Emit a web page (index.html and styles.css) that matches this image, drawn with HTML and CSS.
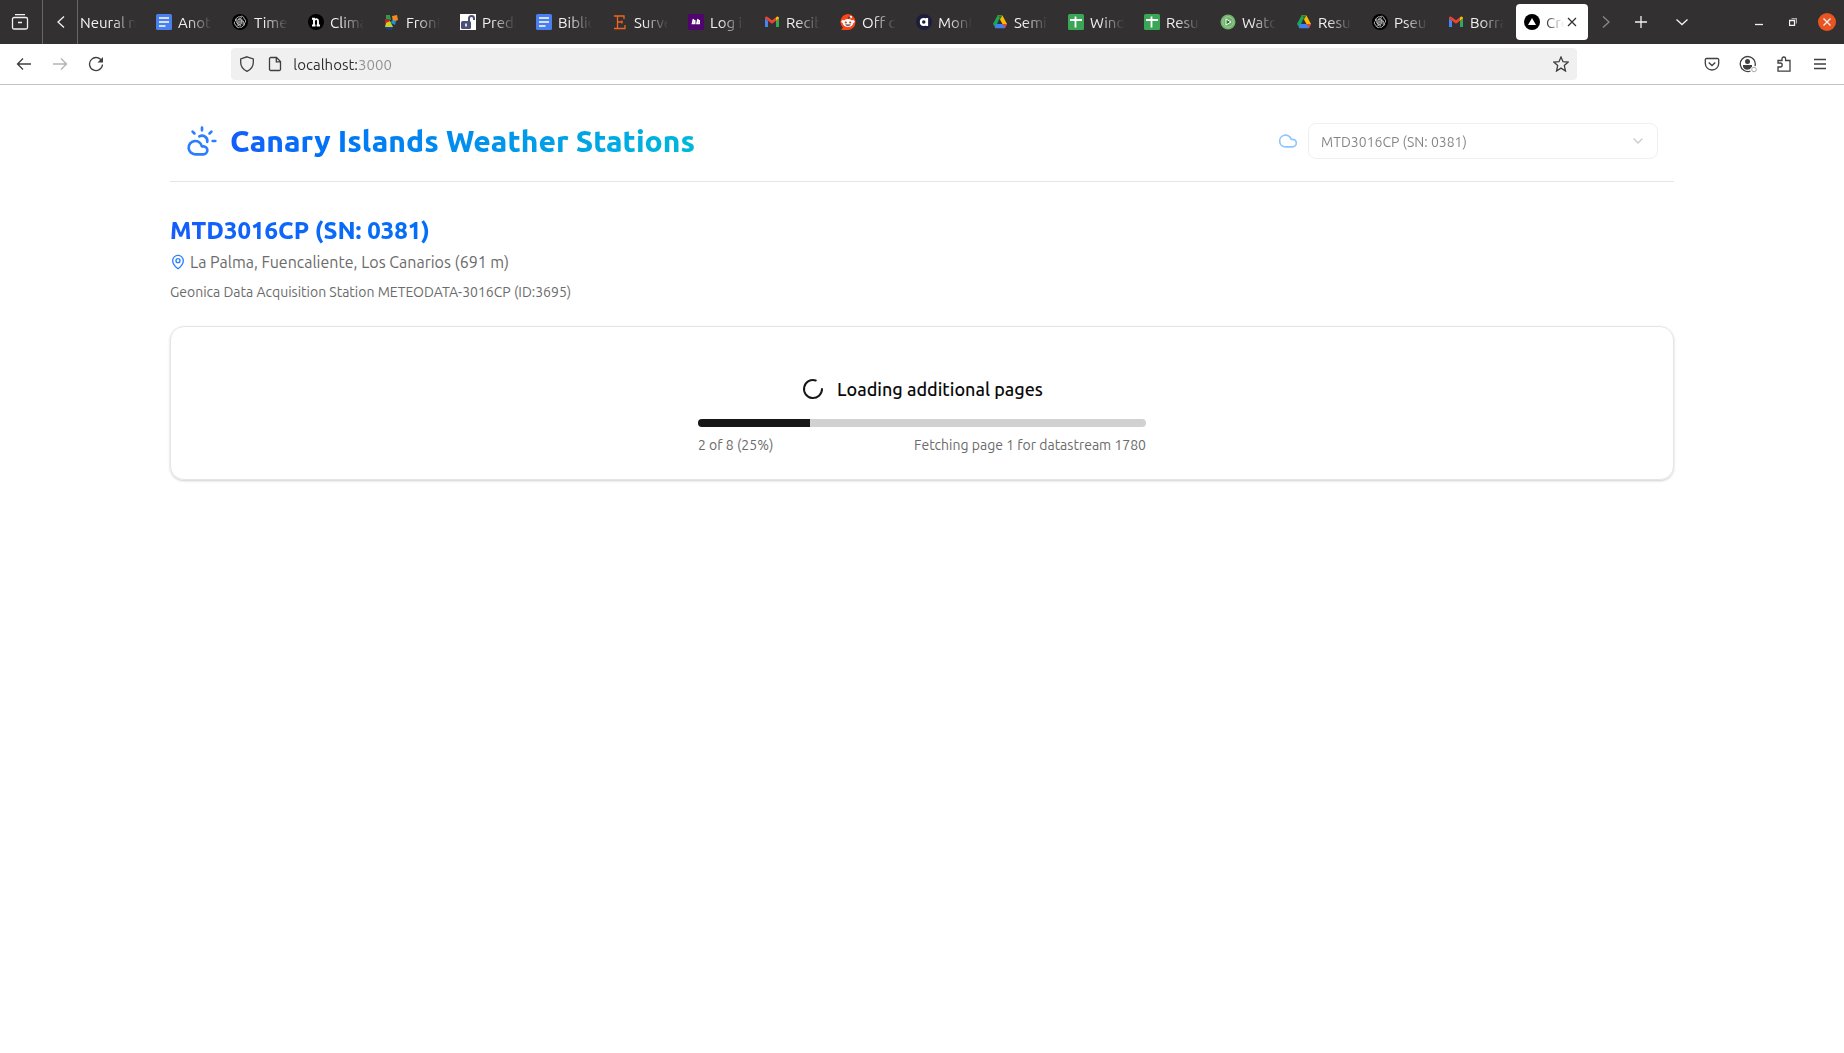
FILE: index.html
```html
<!DOCTYPE html>
<html lang="en">
<head>
<meta charset="utf-8">
<title>Canary Islands Weather Stations</title>
<link rel="stylesheet" href="styles.css">
</head>
<body>
<svg class="sprite" aria-hidden="true">
  <symbol id="docs" viewBox="0 0 16 16"><rect width="16" height="16" rx="1.500" fill="#4a80ee"/><path d="M3 4h10M3 8h10M3 12h6.500" stroke="#fff" stroke-width="1.600"/></symbol>
  <symbol id="gpt" viewBox="0 0 16 16"><circle cx="8" cy="8" r="8" fill="#000"/><g fill="none" stroke="#ddd" stroke-width=".8"><path d="M8 3a2.300 2.300 0 0 1 4 1.800A2.300 2.300 0 0 1 12.500 9 2.300 2.300 0 0 1 11 12a2.300 2.300 0 0 1-3.200 1A2.300 2.300 0 0 1 4 11.200 2.300 2.300 0 0 1 3.500 7 2.300 2.300 0 0 1 5 4 2.300 2.300 0 0 1 8 3z"/><path d="M6 10.800V5.800L10 3.500M4.800 5v4.200l4.500 2.600M5 12.300 9.800 9.500V5M11.200 6.800v4.500M6.500 4.500 11.500 7.500M7 7.300l1-.6 1 .6v1.400l-1 .6-1-.6z"/></g></symbol>
  <symbol id="nn" viewBox="0 0 16 16"><circle cx="8" cy="8" r="8" fill="#000"/><path d="M4 4.800h2v6.700M4 11.500h3.500M6 6.500c1.500-2 4-1.800 4 .5v4.500M8.600 11.500H12" fill="none" stroke="#fff" stroke-width="1.900"/></symbol>
  <symbol id="cubes" viewBox="0 0 16 16"><path d="m2 1 4 0 1 5-5-1z" fill="#2a9d4b"/><path d="m8 2 5-1 1 5-5 2z" fill="#f58a1f"/><path d="m1 5 5 1-1 4-4-1z" fill="#c91f2d"/><path d="m8 6 4 1-1 4-4-2z" fill="#1b95d1"/><path d="m2 9 4-2 3 6-8 0z" fill="#c6d420"/><path d="m1 13 8 0-1 3-6-1z" fill="#1b3e9a"/></symbol>
  <symbol id="lock" viewBox="0 0 16 16"><rect width="16" height="16" fill="#fff"/><rect x="1" y="7" width="10" height="8" rx="1.500" fill="#4d5075"/><path d="M9 8V4.500a2.500 2.500 0 0 1 5 0V6" fill="none" stroke="#4d5075" stroke-width="2"/><path d="M6 9.500v3" stroke="#fff" stroke-width="1.600"/></symbol>
  <symbol id="etsy" viewBox="0 0 16 16"><path d="M2 2h10v3M2 14.500h11V11M5.500 2v12.500M5.500 8H10M10 6.500v3" fill="none" stroke="#f1641e" stroke-width="1.300"/></symbol>
  <symbol id="quote" viewBox="0 0 16 16"><rect width="16" height="16" fill="#50056e"/><path d="M5.500 5 4.500 9.500h2.200V6M10 5 9 9.500h2.200V6" fill="none" stroke="#fff" stroke-width="1.600"/></symbol>
  <symbol id="gmail" viewBox="0 0 16 16"><path d="M1 13V4.500l3 2.200V13z" fill="#4285f4"/><path d="M12 13V6.700l3-2.200V13z" fill="#34a853"/><path d="M1 3.500C1.500 2 3 2.500 4 3.200L8 6.300l4-3.100V6.700L8 9.800 4 6.700 1 4.500z" fill="#ea4335"/><path d="M12 3.200c1.500-1.200 3-.5 3 1.300l-3 2.200z" fill="#fbbc04"/></symbol>
  <symbol id="reddit" viewBox="0 0 16 16"><path d="M8 0a8 8 0 1 1-1 16H1l2-2.200A8 8 0 0 1 8 0z" fill="#ff4518"/><ellipse cx="8" cy="9" rx="5.300" ry="4" fill="#fff"/><circle cx="2.900" cy="7.500" r="1.500" fill="#fff"/><circle cx="13.100" cy="7.500" r="1.500" fill="#fff"/><circle cx="10.800" cy="3" r="1.200" fill="#fff"/><circle cx="5.800" cy="8.500" r="1.100" fill="#d43b14"/><circle cx="10.200" cy="8.500" r="1.100" fill="#d43b14"/><path d="M5.500 10.700h5Q8 13 5.500 10.700zM8 5l.6-2.200 2 .4" fill="#444" stroke="#333" stroke-width=".4"/></symbol>
  <symbol id="aa" viewBox="0 0 16 16"><circle cx="8" cy="8" r="8" fill="#1e1d3b"/><circle cx="7.800" cy="8" r="2.900" fill="none" stroke="#fff" stroke-width="2.200"/><path d="M11 4v8" stroke="#fff" stroke-width="2.200"/></symbol>
  <symbol id="drive" viewBox="0 0 16 16"><path d="M5.500 1.500h3L3.500 14 1 10z" fill="#1ca45c"/><path d="M5.500 1.500h5L15 10h-4.500L8 5.500z" fill="#ffba00"/><path d="M5.500 1.500h5L8 5.500z" fill="#188038"/><path d="M3.700 10H15l-2.200 4.300H2.900z" fill="#3f7ff0"/><path d="M10.500 10H15l-2 4z" fill="#ea4335"/></symbol>
  <symbol id="sheet" viewBox="0 0 16 16"><rect width="16" height="16" rx="1.500" fill="#3aa757"/><path d="M2 6h12M7.500 2.500v11" stroke="#fff" stroke-width="1.800"/></symbol>
  <symbol id="play" viewBox="0 0 16 16"><circle cx="8" cy="8" r="7.500" fill="#70b36c"/><circle cx="8" cy="8" r="5.300" fill="none" stroke="#9bcf94"/><path d="m6 5 5 3-5 3z" fill="#2f6e35" stroke="#fff"/></symbol>
  <symbol id="next" viewBox="0 0 16 16"><circle cx="8" cy="8" r="8" fill="#000"/><path d="m8 4 4 7H4z" fill="#fff"/></symbol>
</svg>

<div class="tabstrip">
  <button class="strip-btn recent" aria-label="Recent tabs"><svg width="18" height="18" viewBox="0 0 18 18"><path d="M4 1.700h10M3 4.500h12a1.500 1.500 0 0 1 1.500 1.500v8.500A1.500 1.500 0 0 1 15 16H3a1.500 1.500 0 0 1-1.500-1.500V6A1.500 1.500 0 0 1 3 4.500zM7 9.500h4"/></svg></button>
  <button class="strip-btn scroll-left" aria-label="Scroll tabs left"><svg width="16" height="16" viewBox="0 0 16 16"><path d="M11 2.500 5 8l6 5.500"/></svg></button>
  <div class="tabs">
    <button class="tab first"><span>Neural n</span></button>
    <button class="tab"><svg><use href="#docs"/></svg><span>Anot</span></button>
    <button class="tab"><svg><use href="#gpt"/></svg><span>Time</span></button>
    <button class="tab"><svg><use href="#nn"/></svg><span>Clima</span></button>
    <button class="tab"><svg><use href="#cubes"/></svg><span>Front</span></button>
    <button class="tab"><svg><use href="#lock"/></svg><span>Predi</span></button>
    <button class="tab"><svg><use href="#docs"/></svg><span>Biblic</span></button>
    <button class="tab"><svg><use href="#etsy"/></svg><span>Surve</span></button>
    <button class="tab"><svg><use href="#quote"/></svg><span>Log in</span></button>
    <button class="tab"><svg><use href="#gmail"/></svg><span>Recib</span></button>
    <button class="tab"><svg><use href="#reddit"/></svg><span>Off c</span></button>
    <button class="tab"><svg><use href="#aa"/></svg><span>Mont</span></button>
    <button class="tab"><svg><use href="#drive"/></svg><span>Semi</span></button>
    <button class="tab"><svg><use href="#sheet"/></svg><span>Wind</span></button>
    <button class="tab"><svg><use href="#sheet"/></svg><span>Resu</span></button>
    <button class="tab"><svg><use href="#play"/></svg><span>Watc</span></button>
    <button class="tab"><svg><use href="#drive"/></svg><span>Resu</span></button>
    <button class="tab"><svg><use href="#gpt"/></svg><span>Pseu</span></button>
    <button class="tab"><svg><use href="#gmail"/></svg><span>Borra</span></button>
    <button class="tab active"><svg><use href="#next"/></svg><span>Cre</span><svg class="tab-close" viewBox="0 0 8 8"><path d="m0 0 8 8M8 0 0 8"/></svg></button>
  </div>
  <button class="strip-btn scroll-right" aria-label="Scroll tabs right"><svg width="16" height="16" viewBox="0 0 16 16"><path d="m5 2.500 6 5.500-6 5.500"/></svg></button>
  <button class="strip-btn" aria-label="New tab"><svg width="12" height="12" viewBox="0 0 12 12"><path d="M6 0v12M0 6h12"/></svg></button>
  <button class="strip-btn all-tabs" aria-label="List all tabs"><svg width="14" height="14" viewBox="0 0 14 14"><path d="m1.500 4.500 5.500 5 5.500-5"/></svg></button>
  <div class="window-buttons">
    <button class="strip-btn" aria-label="Minimize"><svg width="8" height="8" viewBox="0 0 8 8"><path d="M0 6.500h8"/></svg></button>
    <button class="strip-btn" aria-label="Restore"><svg width="8" height="8" viewBox="0 0 8 8"><path d="M.5 2.500h5v5h-5z"/><path class="dim" d="M2.500.5h5v5"/></svg></button>
    <button class="strip-btn" aria-label="Close"><svg width="18" height="18" viewBox="0 0 18 18"><circle class="close-disc" cx="9" cy="9" r="9"/><path d="m5.500 5.500 7 7m0-7-7 7"/></svg></button>
  </div>
</div>

<div class="toolbar">
  <button class="tool" aria-label="Back"><svg width="16" height="16" viewBox="0 0 16 16"><path d="M15 8H1.500M7 2.500 1.500 8 7 13.500"/></svg></button>
  <button class="tool faded" aria-label="Forward"><svg width="16" height="16" viewBox="0 0 16 16"><path d="M1 8h13.500M9 2.500 14.500 8 9 13.500"/></svg></button>
  <button class="tool" aria-label="Reload"><svg width="16" height="16" viewBox="0 0 16 16"><path d="M14 5.500A6.500 6.500 0 1 0 14.500 8.500"/><path class="solid" d="M15 1v5.500H9.500z"/></svg></button>
  <div class="spring"></div>
  <div class="urlbar">
    <svg width="16" height="16" viewBox="0 0 16 16"><path d="M8 .8 14.300 3v3.500c0 4-2.500 7-6.300 8.800C4.200 13.500 1.700 10.500 1.700 6.500V3z"/></svg>
    <svg width="16" height="16" viewBox="0 0 16 16"><path d="M3.700 1.500h5.800l4 4v7.800a1.200 1.200 0 0 1-1.200 1.200H3.700a1.200 1.200 0 0 1-1.200-1.200V2.700a1.200 1.200 0 0 1 1.200-1.200zM9.300 1.500v4.300h4.200"/></svg>
    <input class="address" type="text" value="localhost:3000" aria-label="Address">
    <svg width="16" height="16" viewBox="0 0 16 16"><path d="m8 1 2 4.700 5.200.4-3.900 3.500L12.500 15 8 12.100 3.500 15l1.200-5.400L.8 6.100 6 5.700z"/></svg>
  </div>
  <div class="spring"></div>
  <button class="tool" aria-label="Pocket"><svg width="16" height="16" viewBox="0 0 16 16"><path d="M2.500 2.500h11a1.200 1.200 0 0 1 1.200 1.200v3.800a6.700 6.500 0 0 1-13.400 0V3.700a1.200 1.200 0 0 1 1.200-1.200z"/><path d="M4.700 6.500 8 9.500l3.300-3" stroke-width="1.600"/></svg></button>
  <button class="tool" aria-label="Account"><svg width="18" height="18" viewBox="0 0 18 18"><path d="M11.500 16A7.500 7.500 0 1 1 16 11"/><circle class="solid" cx="8.500" cy="6.500" r="2.500"/><path class="solid" d="M4 10h9v1.500L11 14c-2 1-4 1-5.500 0L4 12z"/><circle class="status" cx="15" cy="14.500" r="2.300"/></svg></button>
  <button class="tool" aria-label="Extensions"><svg width="16" height="16" viewBox="0 0 16 16"><path d="M2 15.200V11h2.200a2 2 0 0 0 0-4H2V4.500h4V2.800a1.800 1.800 0 0 1 3.600 0v1.700H14v10.700z"/></svg></button>
  <button class="tool" aria-label="Menu"><svg width="12" height="12" viewBox="0 0 12 12"><path d="M0 1.500h12M0 6h12M0 10.500h12"/></svg></button>
</div>

<main class="page">
  <header class="site-header">
    <div class="brand">
      <svg class="lucide" width="32" height="32" viewBox="0 0 24 24"><path d="M12 2v2M4.930 4.930l1.410 1.410M20 12h2M19.070 4.930l-1.410 1.410M15.947 12.650a4 4 0 0 0-5.925-4.128M13 22H7a5 5 0 1 1 4.900-6H13a3 3 0 0 1 0 6Z"/></svg>
      <h1 class="gradient-text">Canary Islands Weather Stations</h1>
    </div>
    <div class="picker">
      <svg class="lucide cloud" width="20" height="20" viewBox="0 0 24 24"><path d="M17.500 19H9a7 7 0 1 1 6.710-9h1.790a4.500 4.500 0 1 1 0 9Z"/></svg>
      <div class="select-box">
        <select aria-label="Weather station" disabled><option>MTD3016CP (SN: 0381)</option></select>
        <svg class="lucide chevron" width="16" height="16" viewBox="0 0 24 24"><path d="m6 9 6 6 6-6"/></svg>
      </div>
    </div>
  </header>

  <section class="station">
    <h2 class="gradient-text">MTD3016CP (SN: 0381)</h2>
    <p class="location"><svg class="lucide" width="16" height="16" viewBox="0 0 24 24"><path d="M20 10c0 4.993-5.539 10.193-7.399 11.799a1 1 0 0 1-1.202 0C9.539 20.193 4 14.993 4 10a8 8 0 0 1 16 0"/><circle cx="12" cy="10" r="3"/></svg>La Palma, Fuencaliente, Los Canarios (691 m)</p>
    <p class="description">Geonica Data Acquisition Station METEODATA-3016CP (ID:3695)</p>
  </section>

  <section class="card">
    <div class="loading">
      <svg class="lucide spinner" width="24" height="24" viewBox="0 0 24 24"><path d="M21 12a9 9 0 1 1-6.219-8.560"/></svg>
      <label for="load-progress">Loading additional pages</label>
    </div>
    <div class="progress-group">
      <progress id="load-progress" value="2" max="8"></progress>
      <div class="progress-text"><span>2 of 8 (25%)</span><span>Fetching page 1 for datastream 1780</span></div>
    </div>
  </section>
</main>
</body>
</html>
```
FILE: styles.css
```css
* { box-sizing: border-box; }
body {
  margin: 0;
  background: #fff;
  color: #0a0a0a;
  font-family: Ubuntu, "Noto Sans", sans-serif;
  font-size: 14px;
  line-height: 20px;
}
h1, h2, p { margin: 0; }
button { border: 0; padding: 0; background: none; font: inherit; color: inherit; }
svg { flex: none; }
.sprite { display: none; }

/* Tab strip */
.tabstrip { display: flex; height: 44px; background: #333031; color: #f2f2f2; font-size: 15px; }
.strip-btn { display: flex; flex: none; align-items: center; justify-content: center; width: 38px; }
.strip-btn path { fill: none; stroke: #f2f2f2; stroke-width: 1.3; }
.strip-btn .dim { stroke: #aaa; }
.recent { width: 43px; padding-right: 2px; border-right: 1px solid #666; }
.scroll-left { width: 35px; padding-left: 2px; border-right: 1px solid #666; }
.scroll-right { width: 32px; opacity: .45; }
.all-tabs { width: 44px; }
.tabs { display: flex; min-width: 0; overflow: hidden; }
.tab {
  display: flex;
  flex: none;
  align-items: center;
  gap: 6px;
  width: 72px;
  margin: 4px 2px;
  padding: 2px 8px 0;
  border-radius: 4px;
}
.tab svg { width: 16px; height: 16px; margin-bottom: 2px; }
.tab span {
  flex: 1;
  min-width: 0;
  overflow: hidden;
  text-align: left;
  white-space: nowrap;
  mask-image: linear-gradient(to left, transparent, #000 24px);
}
.tab.first { width: 66px; margin-left: 0; padding-left: 2px; }
.tab.active { gap: 4px; background: #fff; color: #333; }
.tab.active span { margin-left: 2px; mask-image: linear-gradient(to left, transparent, #000 18px); }
.tab .tab-close { width: 8px; height: 8px; margin-right: 4px; stroke: #333; stroke-width: 1.3; overflow: visible; }
.window-buttons { display: flex; margin-left: auto; }
.window-buttons .strip-btn { width: 34px; }
.close-disc { fill: #e95420; }

/* Navigation toolbar */
.toolbar { display: flex; align-items: center; height: 41px; padding: 0 6px; border-bottom: 1px solid #c2c2c2; }
.tool { display: flex; flex: none; align-items: center; justify-content: center; width: 36px; height: 32px; }
.tool path, .urlbar path { fill: none; stroke: #3f3f3f; stroke-width: 1.3; }
.tool .solid { fill: #3f3f3f; stroke: none; }
.tool .status { fill: #fff; stroke: #aaa; }
.faded { opacity: .4; }
.spring { flex: 3; }
.urlbar { display: flex; flex: 34; align-items: center; gap: 12px; height: 32px; padding: 0 8px; border-radius: 4px; background: #f0f0f0; }
.address {
  flex: 1;
  min-width: 0;
  padding: 2px 0 0;
  margin-left: -2px;
  border: 0;
  background: linear-gradient(to right, #2b2b2b 64px, #8f8f8f 64px);
  background-clip: text;
  color: transparent;
  font: inherit;
  font-size: 15px;
}

/* Page */
.page { max-width: 1536px; margin: 0 auto; padding: 16px; }
.gradient-text {
  background: linear-gradient(to right in oklab, #155dfc, #00b8db);
  background-clip: text;
  color: transparent;
  font-weight: 800;
}
.lucide { fill: none; stroke: #2b7fff; stroke-width: 2; stroke-linecap: round; stroke-linejoin: round; }
.site-header {
  display: flex;
  align-items: center;
  justify-content: space-between;
  height: 81px;
  padding: 0 16px;
  border-bottom: 1px solid #e5e5e5;
}
.brand { display: flex; align-items: center; gap: 12px; }
h1 { font-size: 30px; line-height: 36px; }
.picker { display: flex; align-items: center; gap: 10px; }
.cloud { stroke: #8ec5ff; }
.select-box { display: grid; align-items: center; width: 350px; opacity: .5; }
.select-box > * { grid-area: 1 / 1; }
select {
  appearance: none;
  width: 100%;
  height: 36px;
  padding: 2px 12px 0;
  border: 1px solid #e0e0e0;
  border-radius: 8px;
  background: #fff;
  color: #0a0a0a;
  opacity: 1;
  font: inherit;
}
.chevron { justify-self: end; margin-right: 12px; stroke: #999; }

.station { padding-top: 32px; }
h2 { font-size: 24px; line-height: 34px; }
.location { display: flex; align-items: center; gap: 4px; margin-top: 2px; color: #6b6b6b; font-size: 16px; line-height: 24px; }
.description { margin-top: 8px; color: #6b6b6b; }

.card {
  display: flex;
  flex-direction: column;
  align-items: center;
  gap: 16px;
  margin-top: 24px;
  padding: 48px 24px 24px;
  border: 1px solid #e5e5e5;
  border-radius: 14px;
  box-shadow: 0 1px 3px rgb(0 0 0 / .1), 0 1px 2px rgb(0 0 0 / .1);
}
.loading { display: flex; align-items: center; gap: 12px; font-size: 18px; font-weight: 500; line-height: 28px; }
.spinner { stroke: #171717; }
.progress-group { width: 448px; max-width: 100%; }
progress { appearance: none; display: block; width: 100%; height: 8px; border: 0; border-radius: 4px; overflow: hidden; }
progress::-webkit-progress-bar { background: #d1d1d1; }
progress::-webkit-progress-value { background: #171717; }
.progress-text { display: flex; justify-content: space-between; margin-top: 8px; color: #6b6b6b; }
```
